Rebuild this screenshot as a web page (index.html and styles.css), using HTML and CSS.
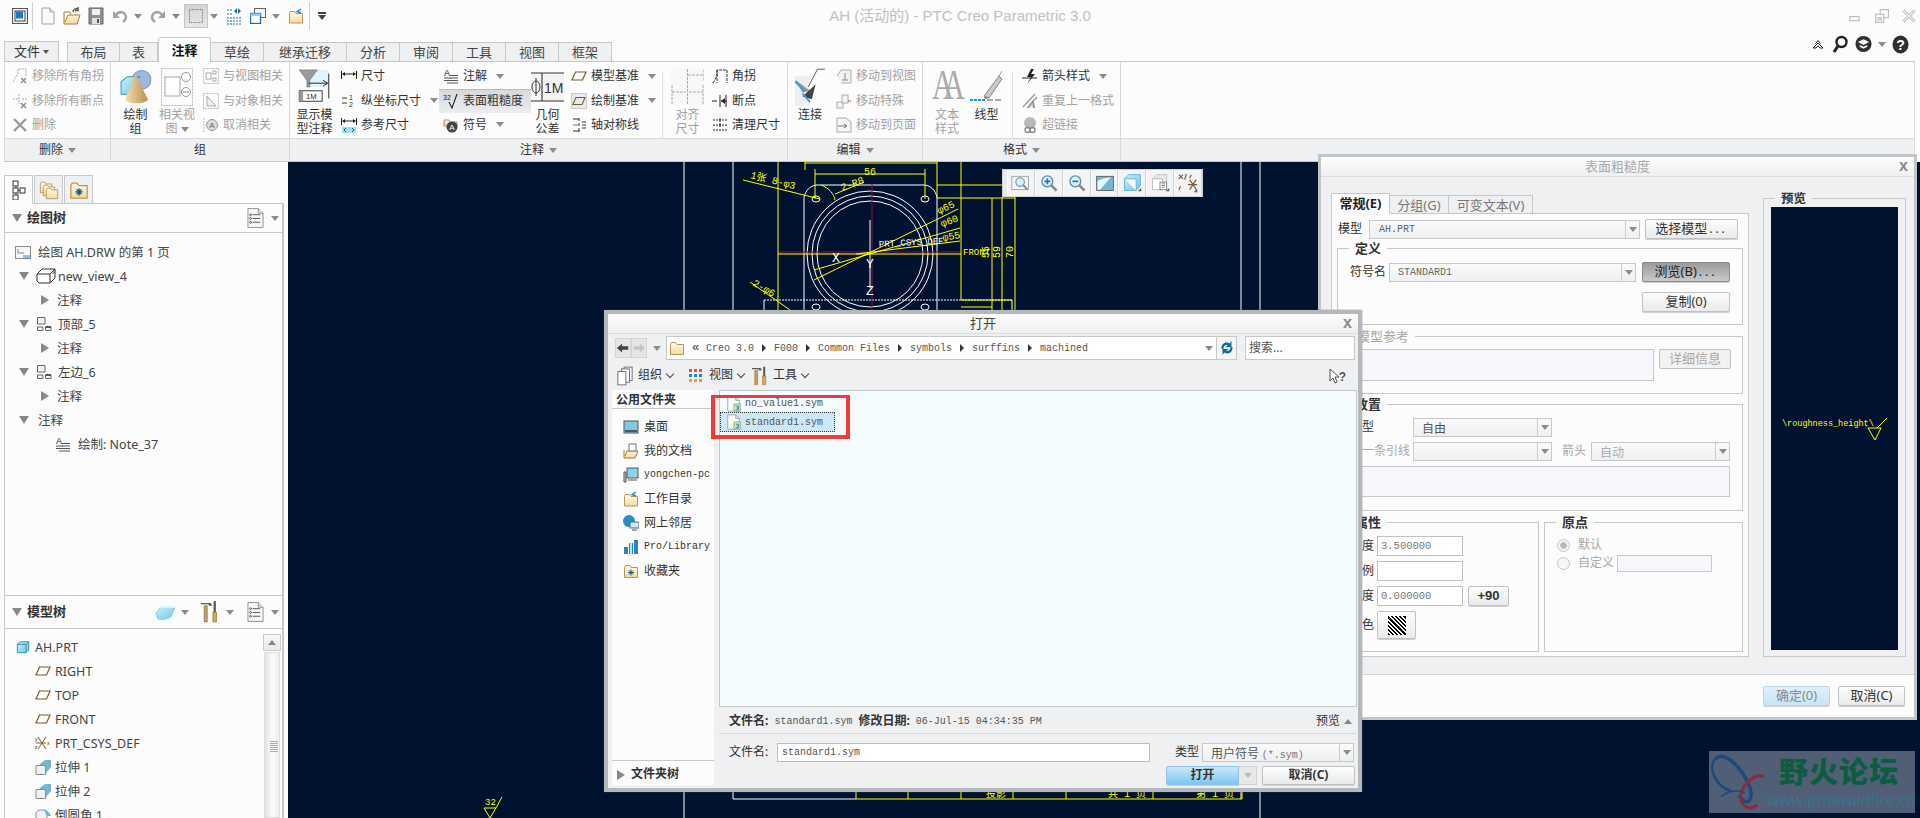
FILE: index.html
```html
<!DOCTYPE html>
<html lang="zh">
<head>
<meta charset="utf-8">
<title>AH (活动的) - PTC Creo Parametric 3.0</title>
<link rel="stylesheet" href="styles.css">
</head>
<body>
<svg class="sprite" aria-hidden="true">
<defs>
<linearGradient id="gFolder" x1="0" y1="0" x2="0" y2="1"><stop offset="0" stop-color="#fffbe8"/><stop offset="1" stop-color="#f3d9a0"/></linearGradient>
<linearGradient id="gCyan" x1="0" y1="0" x2="1" y2="1"><stop offset="0" stop-color="#c8f0fb"/><stop offset="1" stop-color="#6fc6e6"/></linearGradient>
<linearGradient id="gCone" x1="0" y1="0" x2="1" y2="0"><stop offset="0" stop-color="#f5dfb0"/><stop offset="1" stop-color="#b98f4f"/></linearGradient>
<symbol id="folder" viewBox="0 0 16 16"><path d="M1.5 4.5V14.5H14.5V4.5H8L6.5 2.5H2.5L1.5 4.5z" fill="url(#gFolder)" stroke="#b8955a"/></symbol>
<symbol id="folderstar" viewBox="0 0 16 16"><path d="M1.5 4.5V14.5H14.5V4.5H8L6.5 2.5H2.5L1.5 4.5z" fill="url(#gFolder)" stroke="#b8955a"/><path d="M8 6.5V12.5M5 9.5H11M6 7.5L10 11.5M10 7.5L6 11.5" stroke="#0f5c84"/></symbol>
<symbol id="folderup" viewBox="0 0 16 16"><path d="M1.5 5.5V15H14.5V5.5H8L6.5 3.5H2.5L1.5 5.5z" fill="url(#gFolder)" stroke="#b8955a"/><path d="M13 1L9 3.5L13 5" fill="none" stroke="#1f8ab5" stroke-width="1.4"/></symbol>
<symbol id="plane" viewBox="0 0 16 16"><path d="M4.5 4H15L11.5 12H1z" fill="none" stroke="#7a5c2e" stroke-width="1.2"/></symbol>
<symbol id="cube" viewBox="0 0 16 16"><path d="M1.5 5L5 2H14.5V11.5L11.5 14.5H1.5z" fill="url(#gCyan)" stroke="#2b87ad"/><path d="M1.5 5H11.5V14.5M11.5 5L14.5 2" fill="none" stroke="#2b87ad"/></symbol>
<symbol id="extrude" viewBox="0 0 16 16"><path d="M5 5L10 1H16V8L11 14H5z" fill="#76b5cf"/><path d="M1 6.5H10.5V15.5H1z" fill="#f1f1f1" stroke="#8d8d8d"/></symbol>
<symbol id="viewmini" viewBox="0 0 16 16"><path d="M1.5 1.5H9V8H1.5zM1.5 11H7V14.5H1.5zM9.5 11H15V14.5H9.5z" fill="#f4f4f4" stroke="#666"/><path d="M9.5 11H15" stroke="#333" stroke-width="1.4"/></symbol>
<symbol id="note" viewBox="0 0 16 16"><text x="1" y="8" font-size="9" font-family="Liberation Sans" fill="#222">A</text><path d="M1 10H8M7 7.5H15M7 10H15M1 12.5H15M4 15H15" stroke="#555" fill="none"/></symbol>
<symbol id="list" viewBox="0 0 18 22"><path d="M1 1H12L17 6V21H1z" fill="#f5f8fa" stroke="#8a9094"/><path d="M12 1V6H17" fill="#dfe3e6" stroke="#8a9094"/><path d="M6 7.5H14M6 11.5H14M6 15.5H14" stroke="#555"/><circle cx="3.8" cy="7.5" r="1" fill="none" stroke="#555"/><circle cx="3.8" cy="11.5" r="1" fill="none" stroke="#555"/><circle cx="3.8" cy="15.5" r="1" fill="none" stroke="#555"/></symbol>
<symbol id="tools" viewBox="0 0 20 24"><path d="M0 2H10C10 2 12 2 12 5H9L8 3.5H0z" fill="#5a5a5a"/><path d="M3.5 5H7V23H3.5z" fill="#c79f63" stroke="#7a5c2e" stroke-width=".6"/><path d="M14 0H16.5V12H14z" fill="#555"/><path d="M13.2 12H17.2V23H13.2z" fill="#d8ab4e" stroke="#7a5c2e" stroke-width=".6"/></symbol>
<symbol id="sym" viewBox="0 0 16 18"><path d="M1 1H10L14 5V17H1z" fill="#fbfbfb" stroke="#9aa0a4"/><path d="M10 1V5H14" fill="#e6e8ea" stroke="#9aa0a4"/><rect x="8" y="9" width="7" height="8" fill="#d9eec8" stroke="#8aa676"/><path d="M10 11.5H13V13.5H11M13 13.5V15.5H10" fill="none" stroke="#2478b4"/></symbol>
<symbol id="magnif" viewBox="0 0 24 24"><circle cx="10" cy="10" r="6.5" fill="#d8eef8" stroke="#5c8fb0" stroke-width="1.6"/><path d="M14.5 14.5L21 21" stroke="#8a8a8a" stroke-width="3"/></symbol>
</defs>
</svg>

<div class="app">
  <header class="titlebar">
    <div class="qat">
      <svg class="q q-app" viewBox="0 0 16 16"><rect x=".5" y=".5" width="15" height="15" fill="#eee" stroke="#555"/><rect x="3" y="3" width="10" height="10" fill="#fff" stroke="#444"/><rect x="4" y="3.5" width="7" height="7" fill="#1878c0"/></svg>
      <span class="qsep"></span>
      <svg class="q q-new" viewBox="0 0 14 18"><path d="M1 1H9L13 5V17H1z" fill="#fbfcfd" stroke="#9aa"/><path d="M9 1V5H13" fill="#dde" stroke="#9aa"/></svg>
      <svg class="q q-open" viewBox="0 0 18 18"><path d="M1 5V17H14L17 8H5L2 15" fill="url(#gFolder)" stroke="#a87f3c"/><path d="M1 5H7L8 7" fill="none" stroke="#a87f3c"/><path d="M10 5C10 2 13 1 15 2M15 0V3.5H12" fill="none" stroke="#4d4d4d" stroke-width="1.3"/></svg>
      <svg class="q q-save" viewBox="0 0 16 18"><path d="M1 1H15V17H1z" fill="#8b9197" stroke="#666"/><rect x="4" y="2" width="8" height="6" fill="#eef0f2"/><rect x="4" y="11" width="8" height="6" fill="#dfe2e5"/><rect x="9" y="12" width="2" height="4" fill="#555"/></svg>
      <svg class="q q-undo" viewBox="0 0 16 16"><path d="M4 7C6 3 13 3 14 9C14 11 12.5 13 11 14" fill="none" stroke="#a3a3a3" stroke-width="2.4"/><path d="M1 3V10H8z" fill="#a3a3a3"/></svg>
      <i class="dd q-d1"></i>
      <svg class="q q-redo" viewBox="0 0 16 16"><path d="M12 7C10 3 3 3 2 9C2 11 3.5 13 5 14" fill="none" stroke="#a3a3a3" stroke-width="2.4"/><path d="M15 3V10H8z" fill="#a3a3a3"/></svg>
      <i class="dd q-d2"></i>
      <span class="q-sel"><svg class="q-selbox" viewBox="0 0 16 16"><rect x=".5" y=".5" width="15" height="15" fill="none" stroke="#777" stroke-dasharray="2 1"/></svg></span>
      <i class="dd q-d3"></i>
      <svg class="q q-regen" viewBox="0 0 16 18"><path d="M1 3H6M1 7H6M1 11H15M1 14H15M1 17H15" stroke="#22688a" stroke-dasharray="2 1"/><path d="M8 4L11 1V7zM15 4L12 1V7z" fill="#1f6fa0"/></svg>
      <svg class="q q-win" viewBox="0 0 16 16"><rect x="4.5" y=".5" width="11" height="9" fill="#f4f4f4" stroke="#666"/><rect x=".5" y="5.5" width="10" height="10" fill="#fff" stroke="#1f6f9a" stroke-width="1.3"/><rect x=".5" y="5.5" width="10" height="2.5" fill="#9ccfe6"/></svg>
      <i class="dd q-d4"></i>
      <svg class="q q-close" viewBox="0 0 16 18"><use href="#folderup"/></svg>
      <span class="qsep q-s2"></span>
      <span class="q-more"></span>
    </div>
    <div class="appname">AH (活动的) - PTC Creo Parametric 3.0</div>
    <div class="winbtns">
      <svg class="wb" viewBox="0 0 12 12"><rect x="1.5" y="6.5" width="8" height="3.5" fill="none" stroke="#bdbdbd"/></svg>
      <svg class="wb" viewBox="0 0 12 12"><rect x="4.5" y=".5" width="7" height="7" fill="#fcfcfc" stroke="#bdbdbd"/><rect x=".5" y="4.5" width="7" height="7" fill="#fcfcfc" stroke="#bdbdbd"/><rect x="2.5" y="7.5" width="3" height="2" fill="none" stroke="#bdbdbd"/></svg>
      <svg class="wb" viewBox="0 0 12 12"><path d="M1 1L11 11M11 1L1 11" stroke="#c4c4c4" stroke-width="2.4"/><path d="M1 1L11 11M11 1L1 11" stroke="#fcfcfc" stroke-width=".8"/></svg>
    </div>
  </header>

  <nav class="tabrow">
    <button class="filetab">文件<i class="dd dark"></i></button>
    <div class="tabs">
      <span class="tab w2">布局</span><span class="tab w1">表</span><span class="tab w2 on">注释</span><span class="tab w2">草绘</span><span class="tab w4">继承迁移</span><span class="tab w2">分析</span><span class="tab w2">审阅</span><span class="tab w2">工具</span><span class="tab w2">视图</span><span class="tab w2 last">框架</span>
    </div>
    <div class="helpers">
      <svg class="hp h-chev" viewBox="0 0 12 10"><path d="M1 9L6 4L11 9H8L6 7L4 9zM3.5 4.5L6 1.5L8.5 4.5" fill="#fff" stroke="#222"/></svg>
      <svg class="hp h-find" viewBox="0 0 16 18"><circle cx="9.5" cy="7" r="5" fill="#fff" stroke="#222" stroke-width="2.4"/><path d="M6 11L2 17" stroke="#222" stroke-width="3"/></svg>
      <svg class="hp h-hat" viewBox="0 0 18 18"><circle cx="9" cy="9" r="8.5" fill="#2f2f2f"/><path d="M3 7L9 4L15 7L9 10z" fill="#fff"/><path d="M5 10V12L9 14L13 12V10L9 12z" fill="#fff"/></svg>
      <i class="dd h-dd"></i>
      <svg class="hp h-help" viewBox="0 0 18 20"><ellipse cx="9" cy="10" rx="8.5" ry="9.5" fill="#2f2f2f"/><text x="9" y="15.5" font-size="15" font-weight="700" font-family="Liberation Sans" text-anchor="middle" fill="#fff">?</text></svg>
    </div>
  </nav>

  <section class="ribbon">
    <div class="group g-del">
      <div class="tools">
        <div class="col c-del">
          <div class="tool dis"><svg class="ic" viewBox="0 0 16 16"><path d="M1 14L6 5V1H14V8" fill="none" stroke="#aaa" stroke-dasharray="2 1"/><path d="M9 10L14 15M14 10L9 15" stroke="#8b8b8b" stroke-width="1.4"/></svg>移除所有角拐</div>
          <div class="tool dis"><svg class="ic" viewBox="0 0 16 16"><path d="M1 6H6M10 6H15M7 1V11" fill="none" stroke="#aaa" stroke-dasharray="2 1"/><path d="M9 10L14 15M14 10L9 15" stroke="#8b8b8b" stroke-width="1.4"/></svg>移除所有断点</div>
          <div class="tool dis"><svg class="ic" viewBox="0 0 16 16"><path d="M2 2L14 14M14 2L2 14" stroke="#999" stroke-width="2.4"/></svg>删除</div>
        </div>
      </div>
      <div class="glabel">删除<i class="dd"></i></div>
    </div>

    <div class="group g-grp">
      <div class="tools">
        <div class="big b-draw">
          <svg class="bi" viewBox="0 0 32 36"><circle cx="22" cy="11" r="9" fill="#9db7e0" stroke="#8296bd"/><path d="M2 13L8 8H20L14 13V25H2z" fill="url(#gCyan)" stroke="#3c95b8"/><path d="M16 5L6 30C8 35 26 35 28 30z" fill="url(#gCone)"/></svg>
          <span class="bl">绘制<br>组</span>
        </div>
        <div class="big b-rel dis">
          <svg class="bi" viewBox="0 0 32 38"><rect x=".5" y=".5" width="31" height="37" fill="#fbfbfb" stroke="#bbb" stroke-dasharray="2 1"/><rect x="4" y="9" width="15" height="19" fill="#fff" stroke="#aaa"/><circle cx="25" cy="9" r="4.5" fill="none" stroke="#999"/><circle cx="25" cy="24" r="4.5" fill="none" stroke="#999"/><path d="M22 24H28" stroke="#888"/></svg>
          <span class="bl">相关视<br>图<i class="dd"></i></span>
        </div>
        <div class="col c-rel">
          <div class="tool dis"><svg class="ic" viewBox="0 0 16 16"><rect x=".5" y=".5" width="15" height="15" fill="none" stroke="#bbb" stroke-dasharray="2 1"/><rect x="3" y="5" width="5" height="6" fill="#fff" stroke="#aaa"/><rect x="10" y="3" width="3" height="3" fill="#fff" stroke="#aaa"/><rect x="10" y="10" width="3" height="3" fill="#fff" stroke="#aaa"/></svg>与视图相关</div>
          <div class="tool dis"><svg class="ic" viewBox="0 0 16 16"><rect x=".5" y=".5" width="15" height="15" fill="none" stroke="#bbb" stroke-dasharray="2 1"/><path d="M4 3L13 13H4z" fill="#eee" stroke="#aaa"/></svg>与对象相关</div>
          <div class="tool dis"><svg class="ic" viewBox="0 0 16 16"><path d="M1 1V15" stroke="#bbb" stroke-dasharray="2 1"/><circle cx="9" cy="8" r="5.5" fill="#ddd" stroke="#999"/><text x="9" y="11" font-size="8" text-anchor="middle" font-family="Liberation Sans" fill="#666">A</text></svg>取消相关</div>
        </div>
      </div>
      <div class="glabel">组</div>
    </div>

    <div class="group g-ann">
      <div class="tools">
        <div class="big b-show">
          <svg class="bi" viewBox="0 0 34 40"><rect x="8" y="2" width="24" height="18" fill="#dff4fb"/><path d="M1 2H20L12 13V20H9V13z" fill="#9a9a9a" stroke="#666" stroke-width=".6"/><path d="M11 16H30M26 13L31 16L26 19" fill="none" stroke="#222"/><path d="M32 6V32" stroke="#222"/><rect x="1" y="24" width="24" height="11" fill="#fff" stroke="#333"/><rect x="1" y="24" width="4" height="11" fill="#999"/><text x="8" y="33" font-size="8" font-family="Liberation Sans" fill="#222">1M</text></svg>
          <span class="bl">显示模<br>型注释</span>
        </div>
        <div class="col c-dim">
          <div class="tool"><svg class="ic" viewBox="0 0 16 16"><path d="M.5 3V11M15.5 3V11M2 6H14" stroke="#222" fill="none"/><path d="M1 6L4 4V8zM15 6L12 4V8z" fill="#222"/></svg>尺寸</div>
          <div class="tool"><svg class="ic" viewBox="0 0 16 16"><path d="M1 5H6M1 10H6" stroke="#333"/><text x="8" y="7" font-size="7" font-family="Liberation Sans" fill="#333">1</text><text x="8" y="14" font-size="7" font-family="Liberation Sans" fill="#333">2</text></svg>纵坐标尺寸<i class="dd"></i></div>
          <div class="tool"><svg class="ic" viewBox="0 0 16 16"><path d="M.5 1V8M15.5 1V8M2 4H14" stroke="#222" fill="none"/><path d="M1 4L4 2V6zM15 4L12 2V6z" fill="#222"/><rect x="1" y="10" width="14" height="6" fill="#9edff2"/><path d="M5 11L3 13L5 15M11 11L13 13L11 15" fill="none" stroke="#1d5a78"/></svg>参考尺寸</div>
        </div>
        <div class="col c-note">
          <div class="tool"><svg class="ic"><use href="#note"/></svg>注解<i class="dd"></i></div>
          <div class="tool pressed"><svg class="ic" viewBox="0 0 16 16"><text x="0" y="7" font-size="7" font-family="Liberation Sans" fill="#222">32</text><path d="M6 9L9 15L14 1" fill="none" stroke="#222" stroke-width="1.1"/></svg>表面粗糙度</div>
          <div class="tool"><svg class="ic" viewBox="0 0 16 16"><path d="M1 3H6L7 5H14V9H1z" fill="url(#gFolder)" stroke="#a88"/><circle cx="9" cy="10" r="5.5" fill="#444"/><text x="9" y="13" font-size="8" text-anchor="middle" font-family="Liberation Sans" fill="#fff">A</text></svg>符号<i class="dd"></i></div>
        </div>
        <div class="big b-geo">
          <svg class="bi" viewBox="0 0 33 30"><rect x="0" y="1" width="33" height="28" fill="#f4f4f4"/><path d="M0 1H33M0 29H33M11 1V29" stroke="#333" stroke-width="1.1"/><ellipse cx="5" cy="15" rx="4" ry="6" fill="none" stroke="#333"/><path d="M5 6V24" stroke="#333"/><text x="13" y="21" font-size="14" font-family="Liberation Sans" fill="#333">1M</text></svg>
          <span class="bl">几何<br>公差</span>
        </div>
        <div class="col c-base">
          <div class="tool"><svg class="ic"><use href="#plane"/></svg>模型基准<i class="dd"></i></div>
          <div class="tool"><svg class="ic boxed"><use href="#plane"/></svg>绘制基准<i class="dd"></i></div>
          <div class="tool"><svg class="ic" viewBox="0 0 16 16"><path d="M2 2H8M2 14H8M8 1V4M8 6V9M8 11V15M11 5H15M11 8H15M11 11H15" stroke="#333"/><path d="M2 8H7" stroke="#777"/></svg>轴对称线</div>
        </div>
        <span class="vsep s-ann"></span>
        <div class="big b-align dis">
          <svg class="bi" viewBox="0 0 33 36"><rect x="0" y="0" width="33" height="36" fill="#f7f7f7"/><path d="M16.500 0V36M33 .5V12M17 6H32M1 23H15M18 23H32M1 16V36M32 16V36" stroke="#aaa" stroke-dasharray="3 1" fill="none"/></svg>
          <span class="bl">对齐<br>尺寸</span>
        </div>
        <div class="col c-corner">
          <div class="tool"><svg class="ic" viewBox="0 0 16 16"><path d="M1 15L5 8V2H15M5 2V15M15 2V15" stroke="#333" fill="none" stroke-dasharray="3 1"/></svg>角拐</div>
          <div class="tool"><svg class="ic" viewBox="0 0 16 16"><path d="M0 8H5M9 8H15M8 2V14M14 2V14" stroke="#222" fill="none"/><path d="M9 8L13 5V11z" fill="#222"/></svg>断点</div>
          <div class="tool"><svg class="ic" viewBox="0 0 16 16"><path d="M1 3H6M10 3H15M1 8H15M1 13H15" stroke="#222" stroke-dasharray="2 1"/><path d="M8 1V5M8 6V10M7 3H9" stroke="#222"/></svg>清理尺寸</div>
        </div>
      </div>
      <div class="glabel">注释<i class="dd"></i></div>
    </div>

    <div class="group g-edit">
      <div class="tools">
        <div class="big b-conn">
          <svg class="bi" viewBox="0 0 32 40"><rect x="0" y="8" width="16" height="32" fill="#eee"/><path d="M14 20L24 1H32" fill="none" stroke="#555"/><path d="M0 12L16 24L8 26z" fill="#999"/><path d="M8 30L22 17L18 33z" fill="#444"/><path d="M0 14L10 24M8 27L16 36" stroke="#2ba6dd" stroke-width="2"/></svg>
          <span class="bl">连接</span>
        </div>
        <div class="col c-move">
          <div class="tool dis"><svg class="ic" viewBox="0 0 16 16"><path d="M1 8L5 2H15V15H5" fill="#f2f2f2" stroke="#aaa"/><path d="M9 5V12M6 12H12" stroke="#888"/></svg>移动到视图</div>
          <div class="tool dis"><svg class="ic" viewBox="0 0 16 16"><rect x="1" y="9" width="6" height="6" fill="#f2f2f2" stroke="#aaa"/><rect x="6" y="2" width="6" height="8" fill="#f2f2f2" stroke="#aaa"/><path d="M12 8H15" stroke="#777"/></svg>移动特殊</div>
          <div class="tool dis"><svg class="ic" viewBox="0 0 16 16"><path d="M1 1H10L15 5V15H1z" fill="#f7f7f7" stroke="#aaa"/><path d="M2 9H10M8 7L11 9L8 11" fill="none" stroke="#777"/></svg>移动到页面</div>
        </div>
      </div>
      <div class="glabel">编辑<i class="dd"></i></div>
    </div>

    <div class="group g-fmt">
      <div class="tools">
        <div class="big b-text dis">
          <span class="aa">AA</span>
          <span class="bl">文本<br>样式</span>
        </div>
        <div class="big b-line">
          <svg class="bi" viewBox="0 0 33 34"><path d="M14 26L29 6L32 9L19 28z" fill="#c9c9c9" stroke="#888"/><path d="M14 27L19 28L15 29z" fill="#7a5c2e"/><path d="M29 6L32 1" stroke="#999"/><path d="M0 30H16" stroke="#1d9ad6" stroke-width="2" stroke-dasharray="3 1"/><path d="M17 30H33" stroke="#aaa" stroke-width="2" stroke-dasharray="6 2"/></svg>
          <span class="bl">线型</span>
        </div>
        <span class="vsep s-fmt"></span>
        <div class="col c-fmt">
          <div class="tool"><svg class="ic" viewBox="0 0 16 16"><path d="M0 10H15" stroke="#222"/><path d="M9 1L5 9H9L5 16L13 6H9L12 1z" fill="#222"/></svg>箭头样式<i class="dd"></i></div>
          <div class="tool dis"><svg class="ic" viewBox="0 0 16 16"><path d="M1 14L13 1M5 15L15 4" stroke="#999" stroke-width="1.4"/><text x="7" y="15" font-size="10" font-weight="700" font-style="italic" font-family="Liberation Serif" fill="#888">A</text></svg>重复上一格式</div>
          <div class="tool dis"><svg class="ic" viewBox="0 0 16 16"><circle cx="8" cy="6" r="6" fill="#b9b9b9"/><circle cx="5.500" cy="13" r="2.500" fill="none" stroke="#888" stroke-width="1.4"/><circle cx="10.500" cy="13" r="2.500" fill="none" stroke="#888" stroke-width="1.4"/></svg>超链接</div>
        </div>
      </div>
      <div class="glabel">格式<i class="dd"></i></div>
    </div>

    <div class="group g-rest">
      <div class="tools"></div>
      <div class="glabel"></div>
    </div>
  </section>

  <main class="main">
    <aside class="left">
      <div class="ptabs">
        <span class="ptab on"><svg class="ptic" viewBox="0 0 16 20"><path d="M5 5V16M5 10.500H10M5 16H5" stroke="#555"/><rect x="2" y="1" width="5" height="5" fill="#fff" stroke="#333"/><rect x="2" y="8" width="5" height="5" fill="#fff" stroke="#333"/><rect x="2" y="15" width="5" height="5" fill="#fff" stroke="#333"/><rect x="9" y="8" width="5" height="5" fill="#fff" stroke="#333"/></svg></span>
        <span class="ptab"><svg class="ptic2" viewBox="0 0 20 20"><use href="#folder" width="14" height="14" x="0" y="0"/><use href="#folder" width="14" height="14" x="3" y="3"/><use href="#folder" width="14" height="14" x="6" y="6"/></svg></span>
        <span class="ptab"><svg class="ptic2" viewBox="0 0 16 16"><use href="#folderstar"/></svg></span>
      </div>
      <div class="panel">
        <div class="phead p1">
          <i class="tri-d"></i><b>绘图树</b>
          <svg class="plist"><use href="#list"/></svg><i class="dd"></i>
        </div>
        <div class="tree t1">
          <div class="row l0"><svg class="ic" viewBox="0 0 16 16"><rect x=".5" y="2.500" width="15" height="12" fill="#f5f5f5" stroke="#8d8d8d"/><path d="M3 5V9H9" fill="none" stroke="#888"/><path d="M8 12H15M8 14H15" stroke="#3b8cc4"/></svg><span>绘图 AH.DRW 的第 1 页</span></div>
          <div class="row l1"><i class="tri-d"></i><svg class="ic20" viewBox="0 0 20 16"><path d="M1 6L6 1H19V10L14 15H3L1 13z" fill="#fff" stroke="#333"/><path d="M1 6H14V15M14 6L19 1M15 5L19 1.500M16.500 6L19 3.500" fill="none" stroke="#333"/></svg><span>new_view_4</span></div>
          <div class="row l2"><i class="tri-r"></i><span>注释</span></div>
          <div class="row l1"><i class="tri-d"></i><svg class="ic20 narrow"><use href="#viewmini"/></svg><span>顶部_5</span></div>
          <div class="row l2"><i class="tri-r"></i><span>注释</span></div>
          <div class="row l1"><i class="tri-d"></i><svg class="ic20 narrow"><use href="#viewmini"/></svg><span>左边_6</span></div>
          <div class="row l2"><i class="tri-r"></i><span>注释</span></div>
          <div class="row l1"><i class="tri-d"></i><span class="t-note">注释</span></div>
          <div class="row l3"><svg class="ic"><use href="#note"/></svg><span>绘制: Note_37</span></div>
        </div>
        <div class="phead p2">
          <i class="tri-d"></i><b>模型树</b>
          <svg class="pmodel" viewBox="0 0 22 16"><path d="M1 9L6 2H22L18 12C16 16 4 16 3 15z" fill="url(#gCyan)" stroke="#89cbe4"/><path d="M6 2H22" stroke="#dff5fc" stroke-width="2"/></svg><i class="dd"></i>
          <svg class="ptools"><use href="#tools"/></svg><i class="dd"></i>
          <svg class="plist"><use href="#list"/></svg><i class="dd"></i>
        </div>
        <div class="modelwrap">
          <div class="tree t2">
            <div class="row m0"><svg class="ic14"><use href="#cube"/></svg><span>AH.PRT</span></div>
            <div class="row m1"><svg class="ic"><use href="#plane"/></svg><span>RIGHT</span></div>
            <div class="row m1"><svg class="ic"><use href="#plane"/></svg><span>TOP</span></div>
            <div class="row m1"><svg class="ic"><use href="#plane"/></svg><span>FRONT</span></div>
            <div class="row m1"><svg class="ic" viewBox="0 0 16 16"><path d="M3 2L11 14M11 2L3 14M1 8H11" stroke="#7a5c2e" fill="none"/><text x="0" y="6" font-size="5" font-family="Liberation Sans" fill="#222">y</text><text x="0" y="14" font-size="5" font-family="Liberation Sans" fill="#222">z</text><text x="12" y="10" font-size="5" font-family="Liberation Sans" fill="#222">x</text></svg><span>PRT_CSYS_DEF</span></div>
            <div class="row m1"><svg class="ic"><use href="#extrude"/></svg><span>拉伸 1</span></div>
            <div class="row m1"><svg class="ic"><use href="#extrude"/></svg><span>拉伸 2</span></div>
            <div class="row m1"><svg class="ic" viewBox="0 0 16 16"><path d="M1 6C3 2 8 2 12 5V15H1z" fill="#f1f1f1" stroke="#8d8d8d"/><path d="M9 2C12 3 15 6 16 9L12 9C11 7 10 5 9 2z" fill="#76b5cf"/></svg><span>倒圆角 1</span></div>
          </div>
          <div class="sbar"><span class="sup"><i class="tri-u"></i></span><span class="strack"><span class="sgrip"></span></span></div>
        </div>
      </div>
    </aside>

    <div class="canvas">
      <svg class="drawing" viewBox="288 162 1632 656">
        <g class="w">
          <path d="M684 162V818M1260 162V818M733 162V799M1241 162V799M733 799H856"/>
          <path d="M816 185H925M804 197C806 190 810 186 816 185M937 197C935 190 931 186 925 185M804 197V310M937 197V310"/>
          <circle cx="870" cy="254" r="63"/><circle cx="870" cy="254" r="58"/><circle cx="870" cy="254" r="53"/>
          <ellipse cx="816" cy="199" rx="4" ry="3"/><ellipse cx="925" cy="199" rx="4" ry="3"/>
          <ellipse cx="816" cy="307" rx="4" ry="3"/><ellipse cx="925" cy="307" rx="4" ry="3"/>
          <path d="M764 300H1012" stroke-dasharray="2 1"/><path d="M764 300V318M1012 300V318"/>
          <path d="M870 220V288"/>
        </g>
        <g class="r"><path d="M778 252H961M872 184V310"/></g>
        <g class="y">
          <path d="M778 162V310M961 162V300M805 163H937M805 162V170M937 162V198M1015 197V310M1002 197V310M992 198V310"/>
          <path d="M815 174H925M815 169V199M925 169V199"/>
          <path d="M778 254H961M937 185H1002M937 198H1015M961 300H1012M961 307H992"/>
          <path d="M814 280L958 209M814 270L960 228M856 254L960 241"/>
          <path d="M743 180L820 199"/>
          <path d="M821 185C829 188 834 194 835 200M835 194L864 182"/>
          <path d="M750 282L790 310"/>
          <path d="M856 799H1242M856 792V799M908 792V799M961 792V799M1013 792V799M1066 792V799M1153 792V799M1242 792V799"/>
          <path d="M484 808H496L490 818zM496 808L502 797"/>
        </g>
        <g class="ytext">
          <text x="870" y="175" text-anchor="middle">56</text>
          <text transform="translate(750 178) rotate(14)">1张 8-φ3</text>
          <text transform="translate(842 191) rotate(-20)">2-R8</text>
          <text transform="translate(939 214) rotate(-25)">φ65</text>
          <text transform="translate(942 227) rotate(-20)">φ60</text>
          <text transform="translate(943 241) rotate(-10)">φ55</text>
          <text x="963" y="255" class="front">FRONT</text>
          <text transform="translate(989 258) rotate(-90)">55</text>
          <text transform="translate(1000 258) rotate(-90)">59</text>
          <text transform="translate(1013 258) rotate(-90)">70</text>
          <text transform="translate(752 285) rotate(30)">2-φ6</text>
          <text x="986" y="797">投影</text>
          <text x="1108" y="797">共 1 页</text>
          <text x="1196" y="797">第 1 页</text>
          <text x="485" y="805" class="small">32</text>
        </g>
        <g class="wtext">
          <text transform="translate(879 247) rotate(-3)">PRT_CSYS_DEF</text>
          <text x="832" y="262" class="lg">X</text>
          <text x="866" y="295" class="lg">Z</text>
          <text x="866" y="268" class="lg">Y</text>
        </g>
      </svg>

      <div class="viewbar">
        <span class="vb"><svg class="vi" viewBox="0 0 24 24"><rect x="1" y="4" width="20" height="16" fill="#f6f6f6" stroke="#999"/><use href="#magnif" x="3" y="3" width="19" height="19"/></svg></span>
        <span class="vb"><svg class="vi" viewBox="0 0 24 24"><use href="#magnif"/><path d="M6.500 10H13.500M10 6.500V13.500" stroke="#1b7cb0" stroke-width="2"/></svg></span>
        <span class="vb"><svg class="vi" viewBox="0 0 24 24"><use href="#magnif"/><path d="M6.500 10H13.500" stroke="#1b7cb0" stroke-width="2"/></svg></span>
        <span class="vb"><svg class="vi" viewBox="0 0 24 24"><rect x="2" y="4" width="20" height="17" fill="#6fb9d5" stroke="#555"/><path d="M3 10C8 6 14 6 19 5L6 20H3z" fill="#eaf6fb"/></svg></span>
        <span class="vb"><svg class="vi" viewBox="0 0 24 24"><path d="M3 7L8 2H22V15L17 21H3z" fill="url(#gCyan)" stroke="#57abcc"/><path d="M3 7H17V21" fill="#f3fbfe" stroke="#57abcc"/><path d="M23 22L19 22L23 18z" fill="#555"/></svg></span>
        <span class="vb"><svg class="vi" viewBox="0 0 24 24"><path d="M3 7L8 2H20V15H15V7H3z" fill="#e8e8e8" stroke="#bbb"/><path d="M3 7H15V20H3z" fill="#fff" stroke="#bbb"/><rect x="12" y="11" width="8" height="9" fill="#fff" stroke="#777"/><path d="M14 13H18M14 15H18M14 17H18" stroke="#777"/><path d="M23 22L19 22L23 18z" fill="#555"/></svg></span>
        <span class="vb"><svg class="vi" viewBox="0 0 24 24"><path d="M1 2L6 7M6 2L1 7M10 1L8 8M14 8L22 20M22 8L14 20M12 14H23M16 2L14 6M3 16L1 20" stroke="#7a5c2e" stroke-width="1.4"/><path d="M23 23L19 23L23 19z" fill="#555"/></svg></span>
      </div>

      <div class="mark">
        <svg class="marklogo" viewBox="0 0 60 62"><path d="M6 8C14 0 30 12 40 34C46 48 38 58 30 44" fill="none" stroke="#1e4a7a" stroke-width="3.500"/><path d="M6 8C0 16 4 34 22 40" fill="none" stroke="#1e4a7a" stroke-width="2.500"/><path d="M55 26C48 22 36 30 32 42C30 52 38 62 48 54" fill="none" stroke="#8c2a3c" stroke-width="3"/><path d="M12 46C18 40 28 38 36 42" fill="none" stroke="#1e4a7a" stroke-width="1.500"/></svg>
        <div class="marktxt"><div class="cn">野火论坛</div><div class="url">www.proewildfire.cn</div></div>
      </div>
    </div>
  </main>

  <!-- surface finish dialog -->
  <section class="win surf">
    <div class="wtitle faded"><span>表面粗糙度</span><b class="x">x</b></div>
    <div class="sbody">
      <div class="sleft">
        <div class="stabs"><span class="stab on">常规(E)</span><span class="stab t2w">分组(G)</span><span class="stab t3w">可变文本(V)</span></div>
        <div class="sframe">
          <div class="frow r-model"><label class="lb w37">模型</label><span class="combo cb271"><span>AH.PRT</span><i class="cdd"><i class="dd"></i></i></span><button class="btn b93">选择模型<span class="dots">...</span></button></div>

          <div class="gbox gdef">
            <span class="lg">定义</span>
            <div class="frow"><label class="lb w39">符号名</label><span class="combo cb247"><span>STANDARD1</span><i class="cdd"><i class="dd"></i></i></span><button class="btn b88 pressedb">浏览(B)<span class="dots">...</span></button></div>
            <div class="frow rright"><button class="btn b88">复制(0)</button></div>
          </div>

          <div class="gbox gref dim">
            <span class="lg l2">模型参考</span>
            <div class="frow top"><div class="lilac lref"></div><button class="btn b72 off">详细信息</button></div>
          </div>

          <div class="gbox gplace">
            <span class="lg">放置</span>
            <div class="frow"><label class="lb w63">类型</label><span class="combo cb139 sys"><span>自由</span><i class="cdd"><i class="dd"></i></i></span></div>
            <div class="frow dim"><label class="lb w63">第一条引线</label><span class="combo cb139 plain"><span></span><i class="cdd"><i class="dd"></i></i></span><label class="lb w29 gapl">箭头</label><span class="combo cb139 sys"><span>自动</span><i class="cdd"><i class="dd"></i></i></span></div>
            <div class="lilac lplace"></div>
          </div>

          <div class="gpair">
            <div class="gbox gattr">
              <span class="lg">属性</span>
              <div class="frow"><label class="lb w27">高度</label><input class="inp" value="3.500000"></div>
              <div class="frow"><label class="lb w27">比例</label><input class="inp" value=""></div>
              <div class="frow"><label class="lb w27">角度</label><input class="inp" value="0.000000"><button class="btn b41 bold">+90</button></div>
              <div class="frow"><label class="lb w27">颜色</label><button class="btn colorbtn"><span class="swatch"></span></button></div>
            </div>
            <div class="gbox gorig dim">
              <span class="lg dark">原点</span>
              <div class="frow"><span class="radio sel"></span><label class="lb">默认</label></div>
              <div class="frow"><span class="radio"></span><label class="lb w40">自定义</label><span class="lilac lorig"></span></div>
            </div>
          </div>
        </div>
      </div>
      <div class="gbox gprev">
        <span class="lg">预览</span>
        <div class="prevscreen">
          <svg class="prevsvg" viewBox="0 0 127 443">
            <text x="11" y="219" class="rtext">\roughness_height\</text>
            <path d="M106 221L116 211M97 221H110L104 233z" fill="none" stroke="#ffff00"/>
          </svg>
        </div>
      </div>
    </div>
    <div class="sfoot"><button class="btn b67 okb">确定(0)</button><button class="btn b67">取消(C)</button></div>
  </section>

  <!-- open file dialog -->
  <section class="win open">
    <div class="wtitle"><span>打开</span><b class="x">x</b></div>
    <div class="addr">
      <span class="nav"><svg viewBox="0 0 16 16"><path d="M1 8L7 3V6H14V10H7V13z" fill="#444"/></svg></span>
      <span class="nav"><svg viewBox="0 0 16 16"><path d="M15 8L9 3V6H2V10H9V13z" fill="#c5c5c5"/></svg></span>
      <i class="dd navdd"></i>
      <div class="path">
        <svg class="ic pf"><use href="#folder"/></svg>
        <span class="chev">«</span><span class="seg">Creo 3.0</span><i class="tri-k"></i><span class="seg">F000</span><i class="tri-k"></i><span class="seg">Common Files</span><i class="tri-k"></i><span class="seg">symbols</span><i class="tri-k"></i><span class="seg">surffins</span><i class="tri-k"></i><span class="seg">machined</span>
        <i class="dd pathdd"></i>
      </div>
      <span class="refresh"><svg viewBox="0 0 18 20"><path d="M3 11C2 5 8 2 12 5L14 2V9H7L10 7C7 6 5 8 5 11zM15 9C16 15 10 18 6 15L4 18V11H11L8 13C11 14 13 12 13 9z" fill="#0f6a92"/></svg></span>
      <input class="search" value="搜索...">
    </div>
    <div class="otool">
      <svg class="oic" viewBox="0 0 18 22"><rect x="8" y="1" width="9" height="15" fill="#fff" stroke="#666"/><rect x="5" y="3" width="9" height="15" fill="#fff" stroke="#666"/><rect x="1" y="6" width="9" height="15" fill="#fff" stroke="#666"/></svg><span class="ot">组织</span><i class="chevd"></i>
      <svg class="oic grid" viewBox="0 0 16 16"><path d="M1 1H4V4H1zM6 1H9V4H6zM11 1H14V4H11z" fill="#d9534f"/><path d="M1 6H4V9H1zM6 6H9V9H6zM11 6H14V9H11z" fill="#2f83b8"/><path d="M1 11H4V14H1zM6 11H9V14H6zM11 11H14V14H11z" fill="#d5a93d"/></svg><span class="ot">视图</span><i class="chevd"></i>
      <svg class="oic" viewBox="0 0 20 24"><use href="#tools"/></svg><span class="ot">工具</span><i class="chevd"></i>
      <span class="whatsthis"><svg viewBox="0 0 10 16"><path d="M1 1V13L4 10L6 15L8 14L6 9H10z" fill="#fff" stroke="#555"/></svg><b>?</b></span>
    </div>
    <div class="obody">
      <div class="oside">
        <div class="ohead">公用文件夹</div>
        <div class="oitem"><svg class="ic" viewBox="0 0 16 16"><rect x="1" y="2" width="14" height="12" fill="#7fc8e8" stroke="#555"/><rect x="2" y="11" width="12" height="2" fill="#555"/></svg>桌面</div>
        <div class="oitem"><svg class="ic" viewBox="0 0 16 16"><path d="M1 7V15H12L15 8H4L2 13" fill="url(#gFolder)" stroke="#a87f3c"/><rect x="6" y="1" width="7" height="7" fill="#fff" stroke="#777"/></svg>我的文档</div>
        <div class="oitem mono"><svg class="ic" viewBox="0 0 16 16"><rect x="4" y="1" width="11" height="10" fill="#8ed0ec" stroke="#555"/><path d="M1 5H3V15H1zM5 13H14" stroke="#555" fill="#ccc"/></svg>yongchen-pc</div>
        <div class="oitem"><svg class="ic" viewBox="0 0 16 16"><use href="#folderup"/></svg>工作目录</div>
        <div class="oitem"><svg class="ic" viewBox="0 0 16 16"><circle cx="6" cy="6" r="6" fill="#2c8cc8"/><rect x="7" y="7" width="9" height="6" fill="#cde7f3" stroke="#667"/><path d="M9 15H14" stroke="#555"/></svg>网上邻居</div>
        <div class="oitem mono"><svg class="ic" viewBox="0 0 16 16"><path d="M1 8H5V15H1zM6 4H10V15H6zM11 1H15V15H11z" fill="#2a85bb"/><path d="M7 4H9V15H7z" fill="#c9dfe9"/></svg>Pro/Library</div>
        <div class="oitem"><svg class="ic"><use href="#folderstar"/></svg>收藏夹</div>
        <div class="ofoot"><i class="tri-r"></i><b>文件夹树</b></div>
      </div>
      <div class="omain">
        <div class="olist">
          <div class="ofile first"><svg class="ic"><use href="#sym"/></svg>no_value1.sym</div>
          <div class="ofile sel"><svg class="ic"><use href="#sym"/></svg>standard1.sym</div>
          <span class="redbox"></span>
        </div>
        <div class="oinfo"><b>文件名:</b><span class="mono v1">standard1.sym</span><b>修改日期:</b><span class="mono v2">06-Jul-15 04:34:35 PM</span><span class="prevlink">预览<i class="tri-u"></i></span></div>
        <div class="oform">
          <label class="lb w48">文件名:</label><input class="fname" value="standard1.sym">
          <label class="lb ltype">类型</label><span class="combo cb152 sys"><span>用户符号 <em>(*.sym)</em></span><i class="cdd"><i class="dd"></i></i></span>
        </div>
        <div class="obtns">
          <button class="btn blue">打开</button><span class="bluedd"><i class="dd"></i></span><button class="btn b93 cancel">取消(C)</button>
        </div>
      </div>
    </div>
  </section>
</div>
</body>
</html>
```

FILE: styles.css
```css
* { box-sizing: border-box; }
html, body { margin: 0; padding: 0; width: 1920px; height: 818px; overflow: hidden; }
body { background: #fcfcfc; color: #333; font: 12px/1.2 "Noto Sans", "Noto Sans CJK SC", sans-serif; }
.sprite { position: absolute; width: 0; height: 0; }
i { font-style: normal; display: inline-block; }
button, input { font: inherit; color: inherit; margin: 0; }
.app { position: relative; width: 1920px; height: 818px; display: flex; flex-direction: column; }

/* triangles */
.dd { width: 0; height: 0; border-left: 4px solid transparent; border-right: 4px solid transparent; border-top: 5px solid #8b8b8b; margin-left: 5px; vertical-align: middle; }
.dd.dark { border-left-width: 3px; border-right-width: 3px; border-top: 4px solid #555; margin-left: 3px; }
.tri-d { width: 0; height: 0; border-left: 5px solid transparent; border-right: 5px solid transparent; border-top: 8px solid #888; }
.tri-r { width: 0; height: 0; border-top: 5px solid transparent; border-bottom: 5px solid transparent; border-left: 8px solid #888; }
.tri-u { width: 0; height: 0; border-left: 4px solid transparent; border-right: 4px solid transparent; border-bottom: 5px solid #888; }
.tri-k { width: 0; height: 0; border-top: 4px solid transparent; border-bottom: 4px solid transparent; border-left: 4px solid #333; margin: 0 8px 0 8px; }

/* title bar */
.titlebar { height: 42px; display: grid; grid-template-columns: 1fr auto 1fr; align-items: start; flex: none; }
.qat { display: flex; align-items: center; height: 32px; padding-left: 12px; }
.q { display: block; flex: none; }
.q-app { width: 16px; height: 16px; }
.qsep { width: 1px; height: 28px; background: #cfcfcf; margin: 0 8px 0 4px; flex: none; }
.q-new { width: 14px; height: 18px; }
.q-open { width: 18px; height: 18px; margin-left: 8px; }
.q-save { width: 16px; height: 18px; margin-left: 7px; }
.q-undo { width: 16px; height: 16px; margin-left: 8px; }
.q-d1 { margin-left: 6px; }
.q-redo { width: 16px; height: 16px; margin-left: 8px; }
.q-d2 { margin-left: 6px; }
.q-sel { width: 24px; height: 24px; margin-left: 4px; background: linear-gradient(#d2d4d6, #e6e7e8); border: 1px solid #c4c6c8; display: flex; align-items: center; justify-content: center; }
.q-selbox { width: 14px; height: 14px; }
.q-d3 { margin-left: 2px; }
.q-regen { width: 16px; height: 18px; margin-left: 8px; }
.q-win { width: 16px; height: 16px; margin-left: 8px; }
.q-d4 { margin-left: 6px; }
.q-close { width: 16px; height: 18px; margin-left: 8px; }
.q-s2 { margin: 0 8px 0 5px; }
.q-more { width: 8px; height: 8px; background: linear-gradient(#444 0 2px, transparent 2px 4px); }
.q-more::after { content: ""; display: block; margin-top: 3px; width: 0; height: 0; border-left: 4px solid transparent; border-right: 4px solid transparent; border-top: 5px solid #444; }
.appname { color: #bfc1c3; font: 15px/32px "Liberation Sans", "Noto Sans CJK SC", sans-serif; }
.winbtns { display: flex; justify-content: flex-end; gap: 13px; padding: 9px 4px 0 0; }
.wb { width: 14px; height: 14px; display: block; }

/* tab row */
.tabrow { height: 20px; flex: none; margin: 0 5px 0 4px; display: flex; align-items: flex-end; position: relative; border-bottom: 1px solid #c6c8ca; }
.filetab { width: 55px; height: 20px; padding: 0; background: #eff0f2; border: 1px solid #c6c8ca; border-bottom: 0; font-size: 13px; color: #333; }
.tabs { display: flex; margin-left: 8px; align-items: flex-end; }
.tab { height: 19px; background: #eff0f2; border: 1px solid #c6c8ca; border-width: 1px 1px 0 0; text-align: center; font-size: 13px; line-height: 18px; color: #444; }
.tab:first-child { border-left: 1px solid #c6c8ca; }
.tab.w2 { width: 53px; }
.tab.w1 { width: 38px; }
.tab.w4 { width: 83px; }
.tab.on { height: 25px; background: #fcfcfc; border: 1px solid #c6c8ca; border-bottom: 0; margin-bottom: -1px; line-height: 25px; color: #111; font-weight: 700; border-radius: 2px 2px 0 0; }
.helpers { margin-left: auto; display: flex; align-items: center; height: 18px; margin-bottom: 8px; padding-right: 6px; }
.hp { display: block; flex: none; }
.h-chev { width: 12px; height: 10px; }
.h-find { width: 16px; height: 18px; margin-left: 8px; }
.h-hat { width: 17px; height: 18px; margin-left: 7px; }
.h-dd { margin-left: 6px; }
.h-help { width: 17px; height: 19px; margin-left: 6px; }

/* ribbon */
.ribbon { height: 100px; flex: none; margin: 0 5px 0 4px; display: flex; border-bottom: 1px solid #c6c8ca; border-left: 1px solid #dcdcdc; border-right: 1px solid #dcdcdc; }
.group { display: flex; flex-direction: column; border-right: 1px solid #d6d8da; flex: none; }
.g-del { width: 106px; }
.g-grp { width: 179px; }
.g-ann { width: 498px; }
.g-edit { width: 135px; }
.g-fmt { width: 198px; }
.g-rest { flex: 1; border-right: 0; }
.tools { height: 77px; display: flex; padding: 2px 0 0 7px; border-bottom: 1px solid #d6d8da; flex: none; }
.glabel { flex: 1; background: #eff0f2; display: flex; align-items: center; justify-content: center; font-size: 12px; color: #333; }
.col { display: flex; flex-direction: column; flex: none; }
.tool { height: 24.5px; display: flex; align-items: center; gap: 4px; white-space: nowrap; font-size: 12px; color: #333; }
.tool.dis, .big.dis { color: #a2a2a2; }
.ic { width: 16px; height: 16px; display: block; flex: none; }
.ic.boxed { background: #e9eaeb; border: 1px solid #ccc; }
.big { display: flex; flex-direction: column; align-items: center; flex: none; }
.bi { display: block; height: 38px; width: 100%; margin-top: 4px; flex: none; }
.bl { font-size: 12px; line-height: 14px; margin-top: 2px; text-align: center; white-space: nowrap; }
.bl .dd { margin-left: 3px; }
.b-draw { width: 33px; margin-left: 1px; }
.b-rel { width: 34px; margin-left: 8px; }
.c-rel { margin-left: 9px; }
.b-show { width: 35px; }
.c-dim { margin-left: 9px; width: 102px; }
.c-note { width: 88px; }
.tool.pressed { background: linear-gradient(#d7d9db, #ecedee); border-top: 1px solid #bbb; margin-left: -4px; padding-left: 4px; height: 24px; }
.b-geo { width: 33px; }
.c-base { margin-left: 7px; width: 91px; }
.vsep { width: 1px; height: 66px; margin-top: 8px; background: #e0e0e0; flex: none; }
.s-ann { margin-left: 0; }
.b-align { width: 33px; margin-left: 8px; }
.c-corner { margin-left: 8px; }
.b-conn { width: 30px; }
.c-move { margin-left: 11px; }
.b-text { width: 30px; margin-left: 2px; }
.aa { display: block; font: 400 42px/42px "Liberation Serif", serif; letter-spacing: -15px; color: #ababab; height: 42px; padding-right: 12px; transform: scaleX(.72); }
.b-line { width: 33px; margin-left: 8px; }
.s-fmt { margin-left: 9px; }
.c-fmt { margin-left: 9px; }

/* main */
.main { flex: 1; min-height: 0; display: flex; }
.left { width: 288px; flex: none; padding-left: 4px; display: flex; flex-direction: column; overflow: hidden; }
.ptabs { display: flex; gap: 1px; margin-top: 13px; height: 29px; flex: none; align-items: flex-end; margin-bottom: -1px; position: relative; z-index: 1; }
.ptab { width: 29px; height: 29px; background: #eff0f2; border: 1px solid #c6c8ca; border-bottom: 1px solid #c6c8ca; display: flex; align-items: center; justify-content: center; }
.ptab.on { background: #fcfcfc; border-bottom-color: #fcfcfc; }
.ptic { width: 16px; height: 20px; }
.ptic2 { width: 20px; height: 20px; }
.panel { width: 280px; flex: 1; min-height: 0; border: 1px solid #c6c8ca; border-right-width: 2px; border-bottom: 0; display: flex; flex-direction: column; }
.phead { display: flex; align-items: center; flex: none; border-bottom: 1px solid #c6c8ca; padding-left: 7px; }
.phead.p1 { height: 29px; }
.phead.p2 { height: 34px; border-top: 1px solid #c6c8ca; }
.phead b { margin-left: 5px; font-size: 13px; color: #333; margin-right: auto; }
.phead .dd { margin-left: 7px; margin-right: 3px; }
.plist { width: 17px; height: 22px; margin-left: 10px; }
.pmodel { width: 20px; height: 15px; }
.p2 .pmodel + .dd { margin-left: 6px; }
.ptools { width: 18px; height: 22px; margin-left: 9px; }
.tree { display: flex; flex-direction: column; }
.t1 { height: 362px; flex: none; padding-top: 7px; }
.row { height: 24px; display: flex; align-items: center; white-space: nowrap; font-size: 12.500px; color: #444; flex: none; }
.l0 { padding-left: 10px; gap: 7px; }
.l1 { padding-left: 14px; }
.l1 .ic20 { margin-left: 7px; }
.l1 > span { margin-left: 2px; }
.l1 .narrow + span { margin-left: 6px; }
.l1 .t-note { margin-left: 9px; }
.l2 { padding-left: 36px; }
.l2 span { margin-left: 8px; }
.l3 { padding-left: 50px; gap: 7px; }
.ic20 { width: 20px; height: 16px; display: block; flex: none; }
.ic20.narrow { width: 16px; }
.modelwrap { flex: 1; min-height: 0; display: flex; overflow: hidden; padding-top: 6px; }
.t2 { flex: 1; }
.ic14 { width: 14px; height: 14px; display: block; flex: none; }
.m0 { padding-left: 11px; gap: 5px; }
.m1 { padding-left: 30px; gap: 4px; }
.sbar { width: 18px; margin: -1px 1px 0 0; display: flex; flex-direction: column; flex: none; }
.sup { height: 17px; background: linear-gradient(#fafafa, #e8e8e8); border: 1px solid #ccc; display: flex; align-items: center; justify-content: center; flex: none; }
.strack { flex: 1; margin: 1px 1px 0; background: linear-gradient(90deg, #e2e2e2, #fafafa 50%, #eee); border: 1px solid #ddd; position: relative; }
.sgrip { position: absolute; left: 5px; top: 88px; width: 8px; height: 11px; background: repeating-linear-gradient(#aaa 0 1px, #f5f5f5 1px 2px); }

.canvas { flex: 1; background: #00122f; position: relative; overflow: hidden; }
.drawing { display: block; width: 1632px; height: 656px; }
.drawing .w { stroke: #fff; fill: none; stroke-width: 1; }
.drawing .y { stroke: #ffff00; fill: none; stroke-width: 1; }
.drawing .r { stroke: #8a1240; fill: none; stroke-width: 1; }
.ytext text { fill: #ffff00; font: 10px "Liberation Mono", "Noto Sans CJK SC", monospace; }
.ytext .small { font-size: 9px; }
.ytext .front { font-size: 9px; }
.wtext text { fill: #fff; font: 9px "Liberation Mono", monospace; }
.wtext .lg { font-size: 13px; }

.viewbar { position: absolute; left: 714px; top: 7px; width: 201px; height: 28px; background: #e9ebed; border: 1px solid #d2d4d6; display: flex; padding-left: 4px; }
.vb { width: 28px; height: 26px; border-left: 1px solid #fbfbfb; border-right: 1px solid #d0d2d4; display: flex; align-items: center; justify-content: center; background: #f3f4f5; }
.vi { width: 20px; height: 20px; display: block; }

.mark { position: absolute; left: 1421px; top: 589px; width: 206px; height: 62px; background: #505f76; display: flex; }
.marklogo { width: 60px; height: 62px; flex: none; }
.marktxt { display: flex; flex-direction: column; margin-left: -2px; min-width: 0; }
.cn { margin-left: 12px; color: #0d5c42; font: 900 29px/34px "Noto Sans CJK SC", sans-serif; letter-spacing: 1px; margin-top: 2px; }
.url { color: #35748f; font: 15.500px/20px "Noto Sans", sans-serif; margin-top: 3px; white-space: nowrap; }

/* windows */
.win { position: absolute; background: #eef0f2; border: 3px solid #c2c6c9; display: flex; flex-direction: column; }
.wtitle { flex: none; height: 20px; background: linear-gradient(#fcfcfc, #eff0f1); display: flex; align-items: center; justify-content: center; position: relative; font-size: 13px; color: #444; border-bottom: 1px solid #ddd; }
.wtitle.faded { color: #a8a8a8; }
.wtitle .x { position: absolute; right: 6px; top: 0; font: 700 16px/18px "Liberation Sans", sans-serif; color: #8b8b8b; }
.surf { left: 1318px; top: 154px; width: 599px; height: 566px; }
.open { left: 604px; top: 310px; width: 758px; height: 482px; border-width: 4px; border-color: #b4b8bb; box-shadow: 0 0 1px #555; }

.mono { font-family: "Liberation Mono", "Noto Sans CJK SC", monospace !important; font-size: 10px !important; }
.lb { flex: none; font-size: 12px; white-space: nowrap; }
.w37 { width: 37px; padding-left: 6px; }
.w39 { width: 39px; }
.w63 { width: 63px; }
.w29 { width: 29px; }
.w27 { width: 27px; }
.w40 { width: 40px; }
.w48 { width: 48px; }
.gapl { margin-left: 10px; }
.frow { display: flex; align-items: center; }
.frow.top { align-items: flex-start; }
.rright { justify-content: flex-end; }

/* surface dialog */
.sbody { flex: 1; min-height: 0; display: flex; padding: 16px 0 0 10px; gap: 14px; }
.sleft { width: 418px; flex: none; height: 464px; display: flex; flex-direction: column; }
.stabs { display: flex; height: 21px; flex: none; margin-bottom: -1px; position: relative; z-index: 1; align-items: flex-end; }
.stab { width: 59px; height: 19px; text-align: center; line-height: 18px; font-size: 13px; background: #eff0f2; color: #777; border: 1px solid #c6c8ca; border-left: 0; }
.stab.on { height: 21px; background: #fcfcfc; border-left: 1px solid #c6c8ca; border-bottom-color: #fcfcfc; color: #222; font-weight: 700; }
.stab.t3w { width: 84px; }
.sframe { flex: 1; background: #fcfcfc; border: 1px solid #c6c8ca; padding: 5px 5px 0; display: flex; flex-direction: column; }
.r-model { height: 20px; margin-left: -5px; flex: none; }
.combo { flex: none; height: 19px; display: flex; align-items: center; background: linear-gradient(#fafafa, #eef0f1); border: 1px solid #c8c8c8; font: 10px "Liberation Mono", "Noto Sans CJK SC", monospace; color: #666; }
.combo > span { flex: 1; padding-left: 8px; white-space: nowrap; overflow: hidden; }
.cb271 > span { padding-left: 9px; }
.combo.sys > span { font: 12px "Noto Sans CJK SC", sans-serif; color: #555; }
.dim .combo.sys > span { color: #aaa; }
.combo em { font: 10px "Liberation Mono", monospace; }
.cdd { width: 14px; height: 17px; border-left: 1px solid #ccc; display: flex; align-items: center; justify-content: center; flex: none; }
.cdd .dd { margin: 0; }
.cb271 { width: 271px; }
.cb247 { width: 247px; }
.cb139 { width: 139px; }
.cb152 { width: 152px; }
.btn { flex: none; height: 20px; padding: 0; font-size: 13px; border: 1px solid #bfc1c3; border-radius: 2px; background: linear-gradient(#fdfdfd, #e9eaeb); color: #333; box-shadow: 0 1px 0 #d0d0d0; white-space: nowrap; }
.dots { letter-spacing: 3px; margin-left: 2px; font-size: 12px; }
.b93 { width: 93px; margin-left: 5px; }
.b88 { width: 88px; margin-left: 6px; }
.b72 { width: 72px; margin-left: 5px; }
.b41 { width: 41px; margin-left: 5px; }
.b67 { width: 67px; }
.bold { font-weight: 700; font-family: "Liberation Sans", sans-serif; }
.pressedb { background: linear-gradient(#999b9d, #c8cacc); border-color: #888; color: #222; }
.off { color: #a8a8a8; background: #f2f2f2; box-shadow: none; }
.gbox { position: relative; border: 1px solid #c6c8ca; flex: none; }
.lg { position: absolute; top: -9px; left: 11px; padding: 0 6px; background: #fcfcfc; font-size: 13px; font-weight: 700; line-height: 16px; color: #333; }
.dim { color: #a8a8a8; }
.dim .lb { color: #a8a8a8; }
.lg.l2 { font-weight: 400; color: #a8a8a8; left: 13px; }
.lg.dark { color: #333; left: 11px; }
.gdef { height: 77px; margin-top: 9px; padding: 13px 12px 0 12px; }
.gdef .frow + .frow { margin-top: 10px; }
.gref { height: 58px; margin-top: 11px; padding: 12px 12px 0 12px; }
.lilac { display: block; background: #f8f6fd; border: 1px solid #c6c8ca; }
.lref { width: 304px; height: 32px; flex: none; }
.gplace { height: 107px; margin-top: 10px; padding: 13px 12px 0 12px; }
.gplace .frow { margin-bottom: 5px; }
.gplace .frow.dim { margin-bottom: 5px; }
.lplace { height: 31px; width: 380px; }
.gpair { display: flex; gap: 5px; margin-top: 11px; }
.gattr { width: 202px; height: 130px; padding: 13px 0 0 12px; }
.gattr .frow { margin-bottom: 5px; }
.inp { width: 86px; height: 20px; padding: 0 3px; background: #fff; border: 1px solid #c0c0c0; font: 10.500px "Liberation Mono", monospace; color: #777; }
.colorbtn { width: 39px; height: 28px; display: flex; align-items: center; justify-content: center; }
.swatch { width: 18px; height: 19px; background: repeating-linear-gradient(45deg, #000 0 1.500px, #fff 1.500px 3px); }
.gorig { width: 199px; height: 130px; padding: 13px 0 0 12px; }
.gorig .frow { height: 18px; gap: 8px; }
.radio { width: 13px; height: 13px; border: 1px solid #c6c8ca; border-radius: 50%; background: #f6f6f6; flex: none; }
.radio.sel { background: radial-gradient(#b8b8b8 0 3px, #f4f4f4 3.500px); }
.lorig { width: 95px; height: 17px; margin-left: -9px; }
.gprev { width: 143px; height: 459px; margin-top: 5px; border-color: #c6c8ca; padding: 8px 7px 0; }
.gprev .lg { background: #eef0f2; top: -8px; left: 11px; font-weight: 700; font-size: 12.500px; }
.prevscreen { height: 443px; background: #00122f; }
.prevsvg { display: block; width: 100%; height: 100%; }
.rtext { fill: #ffff00; font: 8.500px "Liberation Mono", monospace; }
.sfoot { height: 43px; flex: none; margin-top: -1px; background: #fcfcfc; border-top: 1px solid #d6d8da; display: flex; justify-content: flex-end; align-items: center; gap: 8px; padding-right: 9px; }
.okb { background: linear-gradient(#dff0fa, #c7e5f6); color: #8a8a8a; border-color: #b9d9ea; }

/* open dialog */
.addr { flex: none; height: 24px; margin-top: 2px; display: flex; align-items: stretch; padding-left: 7px; }
.nav { width: 16px; display: flex; align-items: center; justify-content: center; background: #e3e5e7; border: 1px solid #d5d5d5; height: 20px; margin-top: 2px; }
.nav svg { width: 14px; height: 14px; }
.navdd { align-self: center; margin-left: 6px; width: 0; }
.path { width: 551px; margin-left: 5px; background: #fff; border: 1px solid #c6c8ca; display: flex; align-items: center; padding-left: 2px; font: 10px "Liberation Mono", monospace; color: #555; }
.pf { margin-right: 7px; }
.chev { font-size: 12px; color: #333; width: 14px; }
.seg { white-space: nowrap; }
.pathdd { margin-left: auto; margin-right: 3px; }
.refresh { width: 20px; border: 1px solid #c6c8ca; border-left: 0; background: #f4f5f6; display: flex; align-items: center; justify-content: center; }
.refresh svg { width: 16px; height: 18px; }
.search { width: 110px; margin-left: 8px; border: 1px solid #c6c8ca; padding: 0 3px; background: #fff; font-size: 12px; color: #555; }
.otool { flex: none; height: 30px; display: flex; align-items: center; padding: 1px 0 0 9px; }
.oic { width: 16px; height: 22px; display: block; flex: none; }
.oic.grid { height: 16px; margin-left: 7px; }
.ot { margin-left: 5px; font-size: 12px; color: #333; }
.chevd { width: 6px; height: 6px; border-right: 1.500px solid #444; border-bottom: 1.500px solid #444; transform: rotate(45deg); margin: 0 8px 3px 5px; }
.whatsthis { margin-left: auto; margin-right: 12px; display: flex; align-items: flex-end; }
.whatsthis svg { width: 10px; height: 16px; }
.whatsthis b { font: 700 12px "Liberation Sans", sans-serif; color: #555; }
.obody { flex: 1; min-height: 0; display: flex; padding: 0 0 3px 4px; }
.oside { width: 102px; background: #fcfcfc; flex: none; display: flex; flex-direction: column; }
.ohead { height: 19px; font-weight: 700; font-size: 12px; color: #333; border-bottom: 1px solid #c6c8ca; padding: 1px 0 0 4px; line-height: 18px; flex: none; margin-bottom: 6px; }
.oitem { height: 24px; display: flex; align-items: center; gap: 5px; padding-left: 11px; font-size: 12px; color: #333; white-space: nowrap; flex: none; }
.ofoot { margin-top: auto; height: 25px; border-top: 1px solid #c6c8ca; display: flex; align-items: center; padding: 3px 0 0 5px; gap: 6px; flex: none; }
.ofoot b { font-size: 12px; color: #333; }
.omain { flex: 1; min-width: 0; margin-left: 5px; display: flex; flex-direction: column; padding-right: 1px; }
.olist { height: 317px; flex: none; background: #f4fbff; border: 1px solid #c6c8ca; position: relative; padding-top: 1px; }
.ofile { height: 20px; width: 115px; display: flex; align-items: center; gap: 3px; padding-left: 6px; font: 10px "Liberation Mono", monospace; color: #555; margin-bottom: 0; }
.ofile.first { padding-top: 3px; }
.ofile.sel { background: #cde8f5; outline: 1px dotted #333; outline-offset: -1px; }
.redbox { position: absolute; left: -9px; top: 4px; width: 139px; height: 44px; border: solid #f23a3a; border-width: 3px 4px 4px 4px; }
.oinfo { flex: none; height: 27px; display: flex; align-items: center; padding: 3px 0 0 10px; border-bottom: 1px solid #d6d8da; margin-right: -2px; }
.oinfo b { font-size: 12px; color: #333; }
.v1 { margin: 0 6px 0 6px; color: #555; }
.v2 { margin-left: 6px; color: #555; }
.prevlink { margin-left: auto; display: flex; align-items: center; gap: 4px; padding-right: 7px; font-size: 12px; }
.oform { flex: none; display: flex; align-items: center; padding: 8px 0 0 10px; height: 28px; }
.fname { width: 373px; height: 19px; padding: 0 4px; border: 1px solid #bbb; background: #fff; font: 10px "Liberation Mono", monospace; color: #555; }
.ltype { margin-left: 25px; width: 27px; }
.cb152 em { color: #777; }
.obtns { flex: none; display: flex; justify-content: flex-end; padding: 4px 2px 0 0; }
.blue { width: 73px; height: 19px; background: linear-gradient(#cbe8fb, #7ec7f3); border-color: #8cc4e8; font-weight: 700; border-radius: 2px 0 0 2px; font-size: 12px; }
.bluedd { width: 18px; height: 19px; background: #e6e8ea; border: 1px solid #d0d2d4; border-left: 0; display: flex; align-items: center; justify-content: center; }
.bluedd .dd { margin: 0; border-top-color: #bbb; }
.cancel { height: 19px; font-weight: 700; margin-left: 5px; font-size: 12px; }
```
